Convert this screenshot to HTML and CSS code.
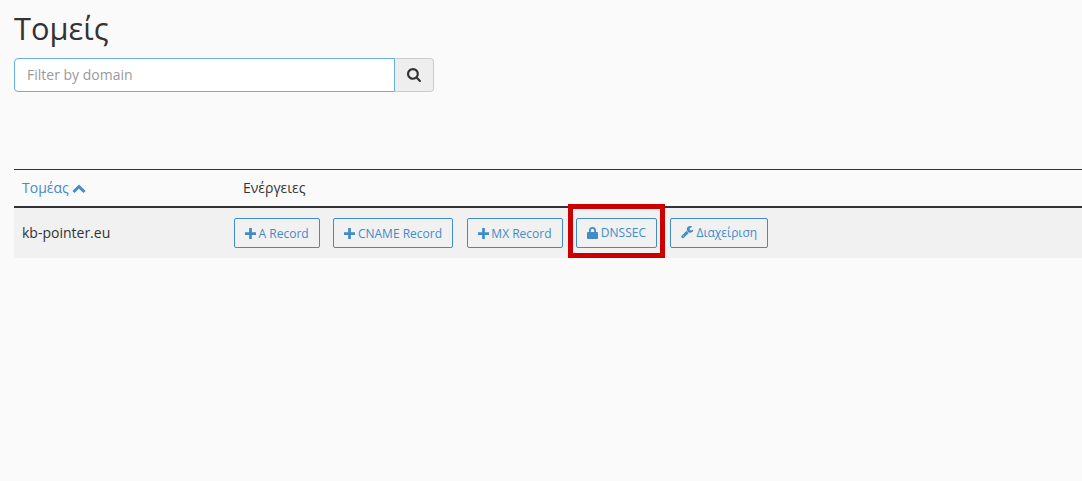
FILE: index.html
```html
<!DOCTYPE html>
<html lang="el">
<head>
    <meta charset="UTF-8">
    <title>Τομείς</title>
    <link rel="stylesheet" href="styles.css">
</head>
<body>
<h1>Τομείς</h1>
<div class="search">
    <input type="text" placeholder="Filter by domain">
    <button class="search-btn" aria-label="Search">
        <svg viewBox="0 0 1664 1664" width="14" height="14"><path fill="#333" d="M1152 704q0-185-131.500-316.500T704 256 387.500 387.500 256 704t131.500 316.500T704 1152t316.500-131.500T1152 704zm512 832q0 52-38 90t-90 38q-54 0-90-38l-343-342q-179 124-399 124-143 0-273.500-55.500t-225-150-150-225T0 704t55.500-273.500 150-225 225-150T704 0t273.500 55.500 225 150 150 225T1408 704q0 220-124 399l343 343q37 37 37 90z"/></svg>
    </button>
</div>
<table class="domains">
    <thead>
    <tr>
        <th class="col-domain"><a href="#">Τομέας <svg class="caret" viewBox="0 0 14 10" width="14" height="10"><path d="M1.500 8 7 2.500 12.500 8" fill="none" stroke="#428bca" stroke-width="3"/></svg></a></th>
        <th class="col-actions">Ενέργειες</th>
    </tr>
    </thead>
    <tbody>
    <tr>
        <td class="col-domain">kb-pointer.eu</td>
        <td class="actions">
            <a class="btn" href="#"><svg class="icon" viewBox="0 0 12 12"><path d="M4.500 0h3v4.500H12v3H7.500V12h-3V7.500H0v-3h4.500z"/></svg>A Record</a>
            <a class="btn" href="#"><svg class="icon" viewBox="0 0 12 12"><path d="M4.500 0h3v4.500H12v3H7.500V12h-3V7.500H0v-3h4.500z"/></svg>CNAME Record</a>
            <a class="btn" href="#"><svg class="icon" viewBox="0 0 12 12"><path d="M4.500 0h3v4.500H12v3H7.500V12h-3V7.500H0v-3h4.500z"/></svg>MX Record</a>
            <span class="marked">
                <a class="btn" href="#"><svg class="icon icon-lock" viewBox="0 0 11 12"><path d="M2 5V3.500a3.500 3.500 0 0 1 7 0V5H7.200V3.500a1.700 1.700 0 0 0-3.400 0V5zM1 5h9a1 1 0 0 1 1 1v5a1 1 0 0 1-1 1H1a1 1 0 0 1-1-1V6a1 1 0 0 1 1-1z"/></svg>DNSSEC</a>
            </span>
            <a class="btn" href="#"><svg class="icon icon-wrench" viewBox="64 128 1664 1664"><path d="M448 1472q0-26-19-45t-45-19-45 19-19 45 19 45 45 19 45-19 19-45zm644-420l-682 682q-37 37-90 37-52 0-90-37l-106-108q-38-36-38-90 0-53 38-91l681-681q39 98 114.500 173.500t173.500 114.500zm634-435q0 39-23 106-47 134-164.500 217.500t-258.500 83.500q-185 0-316.500-131.500t-131.500-316.500 131.500-316.500 316.500-131.500q58 0 121.500 16.500t107.500 46.500q16 11 16 28t-16 28l-293 169v224l193 111q5-3 79-48.500t135.500-81 70.500-35.500q15 0 23.500 10t8.500 25z"/></svg>Διαχείριση</a>
        </td>
    </tr>
    </tbody>
</table>
</body>
</html>
```

FILE: styles.css
```css
body {
    font-family: 'Open Sans', 'Noto Sans', sans-serif;
    font-size: 14px;
    background: #fafafa;
    color: #333;
    margin: 0;
    padding: 0 0 0 14px;
    overflow: hidden;
}

h1 {
    font-size: 30.800px;
    font-weight: 400;
    line-height: 33px;
    margin: 0;
    padding-top: 12px;
}

.search {
    display: flex;
    width: 420px;
    height: 34px;
    margin-top: 13px;
}

.search input {
    flex: 1;
    min-width: 0;
    box-sizing: border-box;
    height: 34px;
    padding: 5px 12px 7px;
    font: inherit;
    color: #555;
    background: #fff;
    border: 1px solid #66afe9;
    border-radius: 4px 0 0 4px;
    outline: none;
}

.search input::placeholder {
    color: #999;
}

.search-btn {
    width: 39px;
    height: 34px;
    padding: 0;
    background: #eee;
    border: 1px solid #ccc;
    border-left: none;
    border-radius: 0 4px 4px 0;
    display: flex;
    align-items: center;
    justify-content: center;
}

.domains {
    width: 1068px;
    margin-top: 77px;
    border-collapse: collapse;
    border-top: 1px solid #333;
}

.domains th {
    height: 34px;
    padding: 0 8px 2px;
    font-weight: 400;
    text-align: left;
    border-bottom: 2px solid #333;
}

.domains td {
    height: 50px;
    padding: 0 8px;
    background: #f1f1f1;
}

.domains .col-domain {
    width: 204px;
}

.domains td.col-domain {
    height: 48px;
    padding-bottom: 2px;
}

.domains .col-actions {
    padding-left: 9px;
}

.domains a {
    color: #428bca;
    text-decoration: none;
}

.caret {
    vertical-align: -1px;
}

.domains .actions {
    padding-left: 0;
    font-size: 0;
}

.domains .btn {
    display: inline-flex;
    align-items: center;
    box-sizing: border-box;
    height: 30px;
    padding: 0 10px;
    margin-right: 13.700px;
    font-size: 12px;
    color: #428bca;
    border: 1px solid #428bca;
    border-radius: 2px;
}

.icon {
    width: 11px;
    height: 11px;
    margin-right: 2.600px;
    fill: #428bca;
}

.icon-lock {
    height: 12px;
}

.icon-wrench {
    width: 12.500px;
    height: 12.500px;
    margin-right: 3px;
}

.marked {
    position: relative;
    display: inline-block;
}

.marked .btn {
    margin-right: 13px;
}

.marked::after {
    content: "";
    position: absolute;
    left: -8px;
    top: -14px;
    width: 97px;
    height: 54px;
    box-sizing: border-box;
    border: 5px solid #cc0000;
}
```
